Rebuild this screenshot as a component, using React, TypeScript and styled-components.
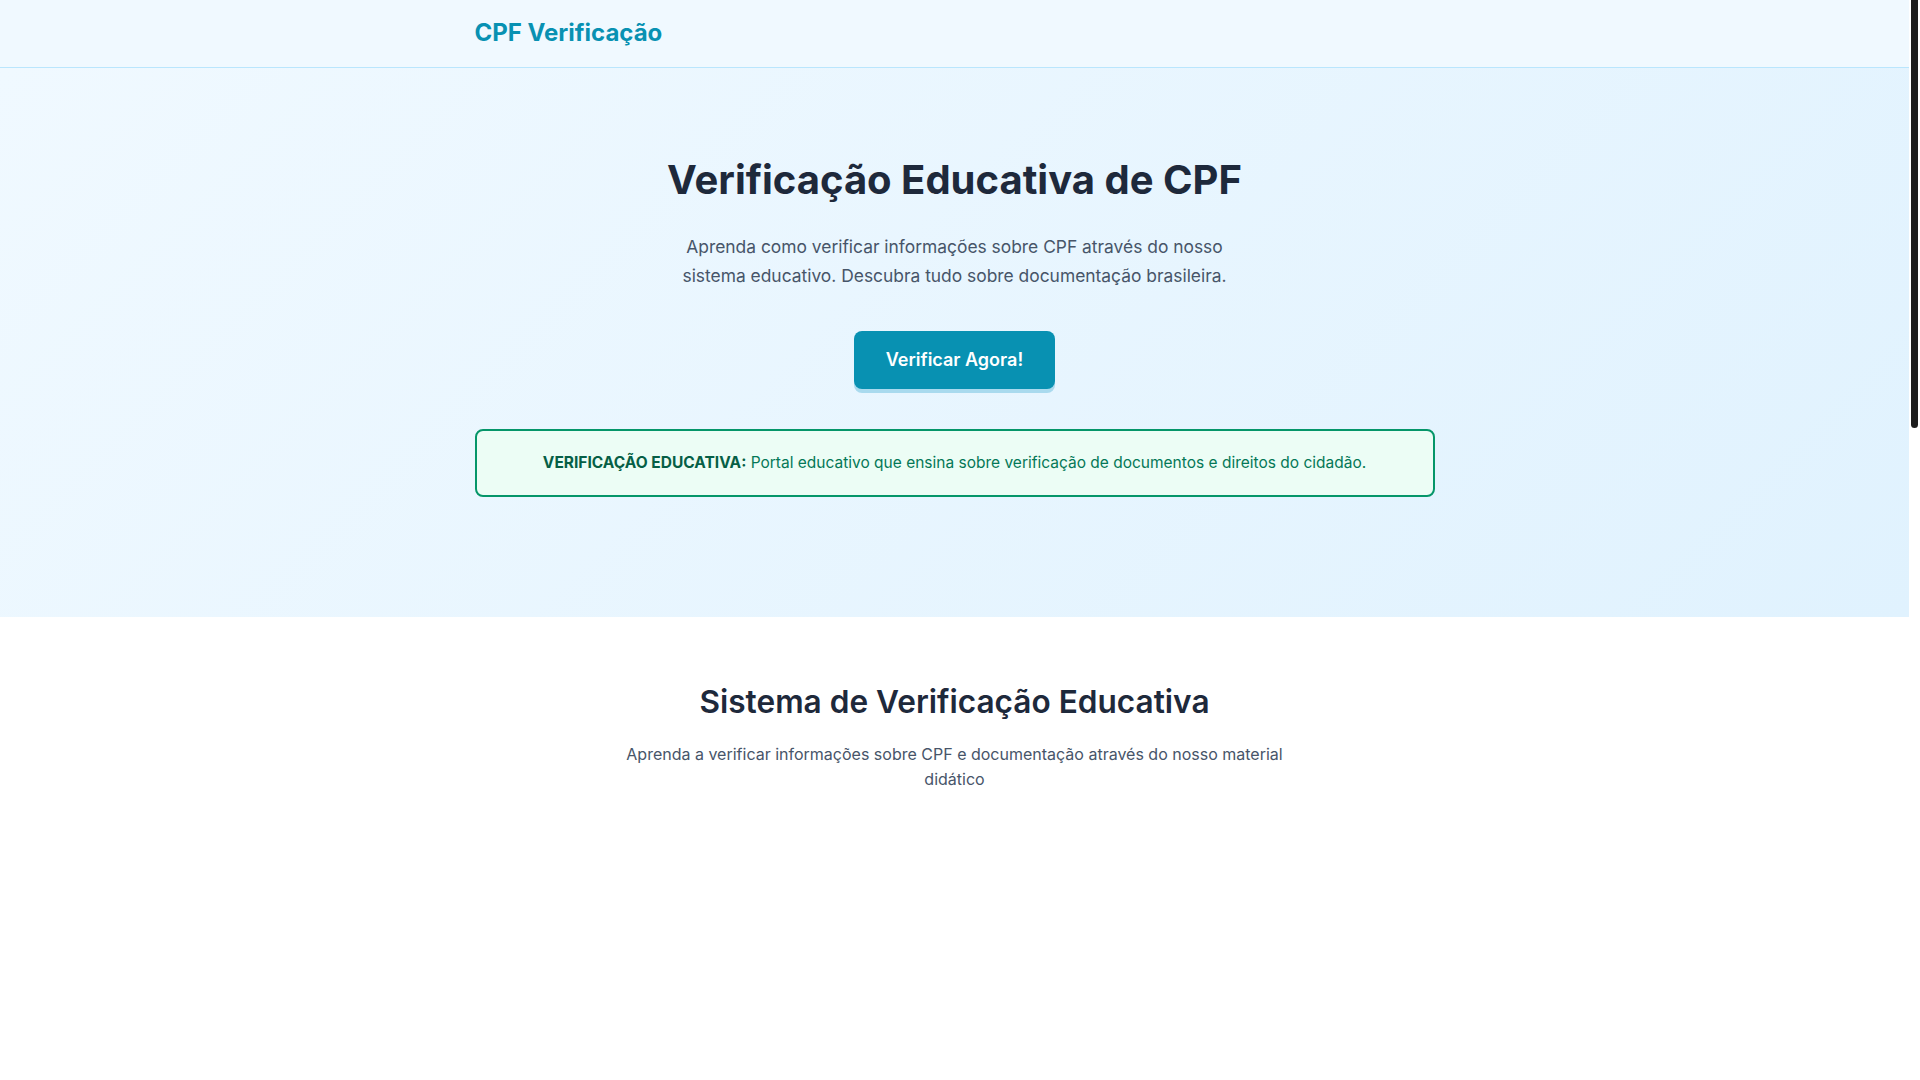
import React from "react";
import styled, { createGlobalStyle } from "styled-components";

const Global = createGlobalStyle`
  html, body { margin: 0; padding: 0; }
  body {
    font-family: Inter, "Noto Sans", "Liberation Sans", sans-serif;
    background: #ffffff;
    color: #1e293b;
    -webkit-font-smoothing: antialiased;
    padding-right: 11px;
  }
  * { box-sizing: border-box; }
`;

const ScrollThumb = styled.div`
  position: fixed;
  top: 0;
  right: 2px;
  width: 7px;
  height: 428px;
  border-radius: 0 0 4px 4px;
  background: #1c1c1c;
  z-index: 10;
`;

const Header = styled.header`
  height: 68px;
  background: #f0f9ff;
  border-bottom: 1px solid #bae6fd;
  display: flex;
  align-items: center;
`;

const Container = styled.div`
  width: 960px;
  margin: 0 auto;
`;

const Logo = styled.div`
  font-size: 24px;
  font-weight: 700;
  color: #0891b2;
  line-height: 1;
  margin-top: -1px;
`;

const Hero = styled.section`
  background: linear-gradient(135deg, #f0f9ff 0%, #e0f2fe 100%);
  padding: 88px 0 120px;
`;

const HeroInner = styled(Container)`
  display: flex;
  flex-direction: column;
  align-items: center;
  text-align: center;
`;

const Title = styled.h1`
  margin: 0;
  font-size: 40px;
  line-height: 48px;
  font-weight: 700;
  color: #1e293b;
`;

const Lead = styled.p`
  margin: 29px 0 0;
  max-width: 600px;
  font-size: 17.4px;
  line-height: 28.8px;
  color: #475569;
`;

const CtaButton = styled.button`
  margin-top: 40px;
  height: 58px;
  padding: 0 32px;
  border: none;
  border-radius: 8px;
  background: #0891b2;
  color: #ffffff;
  font-family: inherit;
  font-size: 18px;
  font-weight: 600;
  cursor: pointer;
  box-shadow: 0 4px 0 #a9daee;
`;

const Notice = styled.div`
  margin-top: 40px;
  width: 100%;
  padding: 20px;
  border: 2px solid #059669;
  border-radius: 8px;
  background: #ecfdf5;
  color: #047857;
  font-size: 15.5px;
  line-height: 24px;
`;

const NoticeLabel = styled.strong`
  font-weight: 700;
  color: #065f46;
`;

const Features = styled.section`
  background: #ffffff;
  padding: 64px 0 0;
  min-height: 2104px;
`;

const FeaturesInner = styled(Container)`
  display: flex;
  flex-direction: column;
  align-items: center;
  text-align: center;
`;

const SectionTitle = styled.h2`
  margin: 0;
  font-size: 31.6px;
  line-height: 42px;
  font-weight: 600;
  color: #1e293b;
`;

const SectionLead = styled.p`
  margin: 19px 0 0;
  max-width: 672px;
  font-size: 16px;
  line-height: 25.6px;
  color: #475569;
`;

export default function App() {
  return (
    <>
      <Global />
      <ScrollThumb aria-hidden="true" />
      <Header>
        <Container>
          <Logo>CPF Verificação</Logo>
        </Container>
      </Header>
      <Hero>
        <HeroInner>
          <Title>Verificação Educativa de CPF</Title>
          <Lead>
            Aprenda como verificar informações sobre CPF através do nosso sistema educativo.
            Descubra tudo sobre documentação brasileira.
          </Lead>
          <CtaButton>Verificar Agora!</CtaButton>
          <Notice>
            <NoticeLabel>VERIFICAÇÃO EDUCATIVA:</NoticeLabel> Portal educativo que ensina sobre
            verificação de documentos e direitos do cidadão.
          </Notice>
        </HeroInner>
      </Hero>
      <Features>
        <FeaturesInner>
          <SectionTitle>Sistema de Verificação Educativa</SectionTitle>
          <SectionLead>
            Aprenda a verificar informações sobre CPF e documentação através do nosso material
            didático
          </SectionLead>
        </FeaturesInner>
      </Features>
    </>
  );
}
